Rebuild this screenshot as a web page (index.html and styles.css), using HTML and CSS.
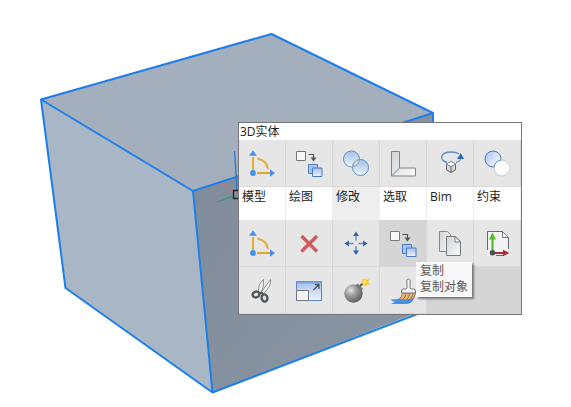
FILE: index.html
```
<!DOCTYPE html>
<html lang="zh-CN">
<head>
  <meta charset="UTF-8" />
  <meta name="viewport" content="width=device-width, initial-scale=1.0"/>
  <title>3D实体</title>
  <link rel="stylesheet" href="styles.css">
</head>
<body>

  <main class="viewport">
    <svg class="scene" viewBox="0 0 571 407" aria-hidden="true">
      <path class="face-top" d="M41 99.500 271.500 34 433 113 193 191Z"/>
      <path class="face-left" d="M41 99.500 193 191 212.500 392.500 65.500 288Z"/>
      <path fill="url(#faceRight)" d="M193 191 433 113 429 308 212.500 392.500Z"/>
      <path stroke="#c9737f" stroke-width="1.300" d="M219 183.500 236 193"/>
      <path stroke="#27a07c" stroke-width="1.300" d="M217 202 235 195.500"/>
      <path class="edges" d="M41 99.500 271.500 34 433 113V308L212.500 392.500 65.500 288ZL193 191 433 113M193 191 212.500 392.500"/>
      <path stroke="#2479d6" stroke-width="1.300" d="M234.500 151 237 190"/>
      <path stroke="#222" stroke-width="1.300" fill="none" d="M233.500 190.500h8v8h-8z"/>
      <defs>
        <linearGradient id="faceRight" x1="0" y1="0" x2="1" y2="1">
          <stop offset="0" stop-color="#808b99"/>
          <stop offset="1" stop-color="#8a96a4"/>
        </linearGradient>
        <linearGradient id="blueFill" x1="0" y1="0" x2="0" y2="1">
          <stop offset="0" stop-color="#a3bfe8"/>
          <stop offset="1" stop-color="#eef4fc"/>
        </linearGradient>
        <linearGradient id="blueSide" x1="0" y1="0" x2="1" y2="0.600">
          <stop offset="0" stop-color="#a6c3ee"/>
          <stop offset="1" stop-color="#f4f8fe"/>
        </linearGradient>
        <linearGradient id="grayFill" x1="0" y1="0" x2="1" y2="1">
          <stop offset="0" stop-color="#cfd3d6"/>
          <stop offset="1" stop-color="#fafafa"/>
        </linearGradient>
        <radialGradient id="ball" cx="0.350" cy="0.320" r="0.700">
          <stop offset="0" stop-color="#e4e4e4"/>
          <stop offset="0.400" stop-color="#a2a2a2"/>
          <stop offset="1" stop-color="#5e5e5e"/>
        </radialGradient>

        <symbol id="icon-angle" viewBox="0 0 46 46">
          <path d="M14 17v13M18 33h13M18.500 18.800q9 1.200 10.500 10" fill="none" stroke="#e2a92f" stroke-width="2"/>
          <path d="M14 10.200 17.800 15.800H10.200ZM36 33 31 36.800V29.200Z" fill="#4590f0"/>
          <circle cx="14" cy="33" r="2.900" fill="#4590f0"/>
        </symbol>

        <symbol id="icon-copy" viewBox="0 0 46 46">
          <path d="M10.500 11.500h9v9h-9z" fill="#f6f7f7" stroke="#777"/>
          <path d="M22.500 14.500h5v4" fill="none" stroke="#555" stroke-width="1.200"/>
          <path d="M24.500 17.500h6l-3 4z" fill="#555"/>
          <path d="M22.500 24.500h9v9h-9z" fill="#a9c3ec" stroke="#4c7dc4"/>
          <path d="M26.500 28h9.500v8.500h-9.500z" fill="url(#blueFill)" stroke="#4c7dc4"/>
        </symbol>
      </defs>
    </svg>

    <section class="quad" aria-label="3D实体">
      <h1 class="quad-title">3D实体</h1>

      <div class="grid">
        <button class="tool" aria-label="模型"><svg><use href="#icon-angle"/></svg></button>
        <button class="tool" aria-label="绘图"><svg><use href="#icon-copy"/></svg></button>
        <button class="tool" aria-label="修改">
          <svg viewBox="0 0 46 46">
            <circle cx="18.500" cy="19" r="8" fill="url(#blueFill)" stroke="#5f8fcb"/>
            <circle cx="27.500" cy="27.500" r="8" fill="url(#blueFill)" stroke="#5f8fcb"/>
            <path d="M19.800 26.800a8 8 0 0 1 6.600-7.200 8 8 0 0 1-6.600 7.200z" fill="#cfd9e6" stroke="#98a4b3"/>
          </svg>
        </button>
        <button class="tool" aria-label="选取">
          <svg viewBox="0 0 46 46">
            <path d="M11.500 11.500h8v16.500h16v8h-24z" fill="url(#grayFill)" stroke="#808486"/>
            <path d="M11.500 36 19.500 28" stroke="#808486"/>
          </svg>
        </button>
        <button class="tool" aria-label="Bim">
          <svg viewBox="0 0 46 46">
            <path d="M20 22.500C12 20.500 12.500 12 24.500 12q5 0 7.500 2M29 22.500q4-1 4.500-4" fill="none" stroke="#5d8cc8" stroke-width="1.300"/>
            <path d="M33.800 13 37 19H30Z" fill="#2f67b4"/>
            <path d="M24 21.500 28.500 24v6L24 32.500 19.500 30V24Z" fill="#d5d7d9" stroke="#64686b"/>
            <path d="M19.500 24 24 26.500 28.500 24M24 26.500v6" fill="none" stroke="#64686b"/>
            <path d="M24 22 28 24 24 26 20 24Z" fill="#fff"/>
          </svg>
        </button>
        <button class="tool" aria-label="约束">
          <svg viewBox="0 0 46 46">
            <circle cx="19" cy="19" r="8" fill="url(#blueSide)" stroke="#4878bd"/>
            <circle cx="28" cy="28" r="8" fill="#fdfdfd" stroke="#c6c8ca"/>
            <path d="M20 27.200A8 8 0 0 1 27 20" fill="none" stroke="#6a94cd"/>
          </svg>
        </button>

        <button class="tab">模型</button>
        <button class="tab">绘图</button>
        <button class="tab active">修改</button>
        <button class="tab">选取</button>
        <button class="tab">Bim</button>
        <button class="tab">约束</button>

        <button class="tool" aria-label="操作"><svg><use href="#icon-angle"/></svg></button>
        <button class="tool" aria-label="删除">
          <svg viewBox="0 0 46 46"><path d="M15.500 16 31 31.500M31 16 15.500 31.500" stroke="#cb5f60" stroke-width="3.400"/></svg>
        </button>
        <button class="tool" aria-label="移动">
          <svg viewBox="0 0 46 46">
            <path d="M23 15v5.500M23 26v6M15 23.500h5.500M25.500 23.500h6" stroke="#5b89c4" stroke-width="1.300"/>
            <path d="M23 11.500 26 16H20ZM23 35 20 30.500h6ZM11.300 23.500 16 20.500v6ZM34.700 23.500 30 26.500v-6Z" fill="#3166ae"/>
          </svg>
        </button>
        <button class="tool hover" aria-label="复制" aria-describedby="tip"><svg><use href="#icon-copy"/></svg></button>
        <button class="tool" aria-label="粘贴">
          <svg viewBox="0 0 46 46">
            <path d="M12.500 11.500h8l3 3v17h-11z" fill="url(#grayFill)" stroke="#85898c"/>
            <path d="M19.500 16.500h9l5 5v14h-14z" fill="url(#grayFill)" stroke="#777b7e"/>
            <path d="M28 16.500v5.500h5.500z" fill="#fff" stroke="#777b7e"/>
          </svg>
        </button>
        <button class="tool" aria-label="基点粘贴">
          <svg viewBox="0 0 46 46">
            <path d="M13 11.500h16l6 6v18H13z" fill="#f1f2f3"/>
            <path d="M13.500 30V11.500h15l6 6V29M22 35.500h8" fill="none" stroke="#666a6d"/>
            <path d="M28.500 11.500v6h6z" fill="#fff" stroke="#777"/>
            <path d="M18.500 30V18" stroke="#52bd2b" stroke-width="2.200"/>
            <path d="M18.500 12.500 22 19.500H15Z" fill="#52bd2b"/>
            <path d="M21 33h9" stroke="#b82a2a" stroke-width="2"/>
            <path d="M35.500 33 29 36.300v-6.600Z" fill="#b82a2a"/>
            <circle cx="18.500" cy="32.800" r="2.800" fill="#4c4f52"/>
          </svg>
        </button>

        <button class="tool" aria-label="修剪">
          <svg viewBox="0 0 46 46">
            <path d="M20 26Q18 18 24.500 12.500 25.500 20 21.500 26.500Z" fill="#f2f2f2" stroke="#8b8e90"/>
            <path d="M21.500 26.500 31.500 12.500Q33 18 24.500 26.500Z" fill="#f7f7f7" stroke="#8b8e90"/>
            <ellipse cx="17" cy="27.500" rx="3.400" ry="2.900" fill="none" stroke="#53565a" stroke-width="2.400" transform="rotate(-20 17 27.500)"/>
            <ellipse cx="25.500" cy="31" rx="2.900" ry="3.600" fill="none" stroke="#53565a" stroke-width="2.400" transform="rotate(-12 25.500 31)"/>
            <path d="M20 26h4" stroke="#53565a" stroke-width="2.200"/>
          </svg>
        </button>
        <button class="tool" aria-label="缩放">
          <svg viewBox="0 0 46 46">
            <path d="M10.500 14.500h25v19h-25z" fill="url(#blueFill)" stroke="#5a88c6"/>
            <path d="M11 15.500h24" stroke="#7ba3dc" stroke-width="2"/>
            <path d="M10.500 23.500h12v10h-12z" fill="#f4f4f4" stroke="#74777a"/>
            <path d="M27.500 23 32.500 18M29 17.500h4v4.500" fill="none" stroke="#4a5560" stroke-width="1.300"/>
          </svg>
        </button>
        <button class="tool" aria-label="分解">
          <svg viewBox="0 0 46 46">
            <path d="M26 20 31 15" stroke="#555" stroke-width="2"/>
            <path d="M31.500 10.500 33 13l3-1-.8 3 1.300 2.500-3 .2-2 2-1-2.800-3-.4 2-2.200-.5-2.500 2.200.8z" fill="#fbc82e"/>
            <circle cx="31.800" cy="15" r="1.400" fill="#fff2a0"/>
            <circle cx="20.500" cy="26.500" r="9.200" fill="url(#ball)"/>
            <path d="M23.500 17.500 29 23" stroke="#777" stroke-width="3"/>
          </svg>
        </button>
        <button class="tool" aria-label="特性匹配">
          <svg viewBox="0 0 46 46">
            <path d="M11 32.500q9 0 12-3.500l12 .5q-3 7.500-8 7.500H11q3-1.200 4-2.200-3 0-4-2.300z" fill="#4590ee"/>
            <path d="M22.500 26H36l-3.500 6q-7 1.500-13.500.5 3-2.500 3.500-6.500z" fill="#e5b57a" stroke="#a27b4e"/>
            <path d="M26 27q-.5 3.500-3 5M29.500 27q-.5 3.500-2.500 5M33 27q-.5 3-2.500 5" fill="none" stroke="#9f7545"/>
            <path d="M21.500 26v-2q0-2 2-2h2.500q1.500-1 1-4l-.2-4q.2-2 1.700-2t1.700 2l-.2 4q-.5 3 1 4h2.500q2 0 2 2v2z" fill="#f2f3f4" stroke="#777b7e"/>
          </svg>
        </button>
      </div>

      <div class="tooltip" id="tip" role="tooltip">复制<br>复制对象</div>
    </section>
  </main>

</body>
</html>
```
FILE: styles.css
```
body {
  margin: 0;
  background: #fff;
  font-family: "Open Sans", "Noto Sans CJK SC", sans-serif;
  font-size: 12px;
  line-height: 16px;
  color: #222;
}

.viewport {
  position: relative;
}

.scene {
  display: block;
  width: 100%;
  height: auto;
}

.face-top {
  fill: #a3afbd;
}

.face-left {
  fill: #a9b6c6;
}

.edges {
  fill: none;
  stroke: #1e7fe8;
  stroke-width: 2;
  stroke-linejoin: round;
}

/* quad menu floating over the model */
.quad {
  position: absolute;
  left: 238px;
  top: 122px;
  background: #fff;
  border: 1px solid #777;
}

.quad-title {
  margin: 0;
  padding: 1px 1px 0;
  font-size: 12px;
  line-height: 16px;
  font-weight: normal;
}

.grid {
  display: grid;
  grid-template-columns: repeat(6, 47px);
  grid-template-rows: 47px 33px 47px 47px;
  background: #d5d5d5;
}

button {
  margin: 0;
  border: 0;
  font: inherit;
  color: inherit;
}

.tool {
  padding: 0;
  background: #e6e6e6;
  border-right: 1px solid #d8d8d8;
  border-bottom: 1px solid #d8d8d8;
}

.tool svg {
  display: block;
  width: 46px;
  height: 46px;
}

.tool.hover {
  background: #d5d5d5;
}

.tab {
  display: flex;
  align-items: flex-start;
  padding: 2px 3px;
  background: #fff;
  border-right: 1px solid #eee;
}

.tab.active {
  background: #eee;
}

.tooltip {
  position: absolute;
  left: 177px;
  top: 139px;
  padding: 1px 4px 2px;
  background: #f8f8f8;
  color: #575757;
  white-space: nowrap;
  box-shadow: 2px 2px 2px #777;
}
```
